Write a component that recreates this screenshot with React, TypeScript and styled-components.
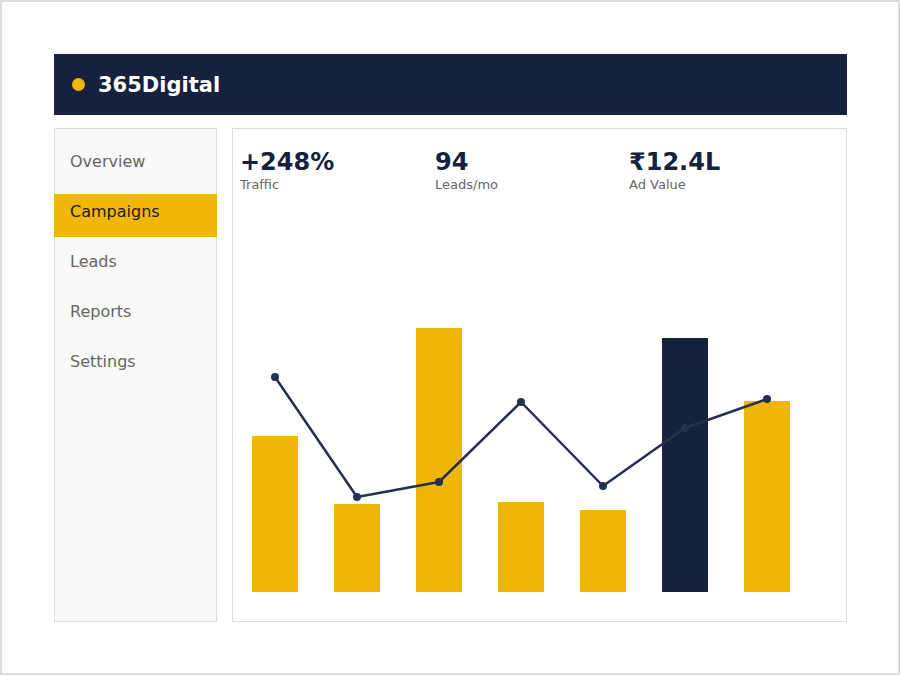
import React from "react";
import styled, { createGlobalStyle } from "styled-components";

const GlobalStyle = createGlobalStyle`
  html, body {
    margin: 0;
    padding: 0;
    background: #fff;
  }
  body {
    font-family: "DejaVu Sans", "Liberation Sans", sans-serif;
  }
`;

const NAVY = "#16223d";
const GOLD = "#f0b708";

const Frame = styled.div`
  box-sizing: border-box;
  width: 900px;
  height: 675px;
  border: 2px solid #dcdcdc;
  padding: 52px 51px 0 52px;
  display: flex;
  flex-direction: column;
`;

const Header = styled.header`
  height: 61px;
  background: ${NAVY};
  display: flex;
  align-items: center;
  padding-left: 18px;
  gap: 13px;
`;

const Dot = styled.span`
  width: 13px;
  height: 13px;
  border-radius: 50%;
  background: ${GOLD};
`;

const Brand = styled.div`
  color: #fff;
  font-weight: bold;
  font-size: 21px;
`;

const Body = styled.div`
  display: flex;
  gap: 15px;
  margin-top: 13px;
  height: 494px;
`;

const Sidebar = styled.nav`
  box-sizing: border-box;
  width: 163px;
  border: 1px solid #dddddd;
  background: #f9f9f7;
  padding-top: 15px;
  display: flex;
  flex-direction: column;
  gap: 7px;
`;

const NavItem = styled.div<{ $active?: boolean }>`
  margin: 0 -1px;
  padding: 8px 16px 16px;
  font-size: 16px;
  color: ${(p) => (p.$active ? "#1c1c1c" : "#666")};
  background: ${(p) => (p.$active ? GOLD : "transparent")};
`;

const Panel = styled.section`
  box-sizing: border-box;
  flex: 1;
  border: 1px solid #dddddd;
  background: #fff;
  display: flex;
  flex-direction: column;
`;

const Stats = styled.div`
  display: grid;
  grid-template-columns: 195px 194px 195px;
  padding: 19px 7px 0;
`;

const Stat = styled.div`
  display: flex;
  flex-direction: column;
`;

const Value = styled.div`
  font-size: 24px;
  font-weight: bold;
  color: ${NAVY};
`;

const Label = styled.div`
  margin-top: 1px;
  font-size: 13px;
  color: #666;
`;

const Chart = styled.svg`
  display: block;
`;

const navItems = ["Overview", "Campaigns", "Leads", "Reports", "Settings"];

const stats = [
  { value: "+248%", label: "Traffic" },
  { value: "94", label: "Leads/mo" },
  { value: "₹12.4L", label: "Ad Value" },
];

// bar heights and trend points, in chart pixels
const bars = [156, 88, 264, 90, 82, 254, 191];
const highlightBar = 5;
const trend = [186, 306, 291, 211, 295, 237, 208];

const BASE = 400;
const BAR_W = 46;
const STEP = 82;
const LEFT = 19;

function TrafficChart() {
  const cx = (i: number) => LEFT + i * STEP + BAR_W / 2;
  const points = trend.map((y, i) => `${cx(i)},${y - 1}`).join(" ");
  return (
    <Chart width={613} height={428} viewBox="0 0 613 428">
      {bars.map((h, i) => (
        <rect
          key={i}
          x={LEFT + i * STEP}
          y={BASE - h}
          width={BAR_W}
          height={h}
          fill={i === highlightBar ? NAVY : GOLD}
        />
      ))}
      <polyline
        points={points}
        fill="none"
        stroke="#25304f"
        strokeWidth={2.5}
        strokeLinejoin="round"
      />
      {trend.map((y, i) => (
        <circle key={i} cx={cx(i)} cy={y - 1} r={4} fill="#25304f" />
      ))}
    </Chart>
  );
}

export default function App() {
  return (
    <>
      <GlobalStyle />
      <Frame>
        <Header>
          <Dot />
          <Brand>365Digital</Brand>
        </Header>
        <Body>
          <Sidebar>
            {navItems.map((n) => (
              <NavItem key={n} $active={n === "Campaigns"}>
                {n}
              </NavItem>
            ))}
          </Sidebar>
          <Panel>
            <Stats>
              {stats.map((s) => (
                <Stat key={s.label}>
                  <Value>{s.value}</Value>
                  <Label>{s.label}</Label>
                </Stat>
              ))}
            </Stats>
            <TrafficChart />
          </Panel>
        </Body>
      </Frame>
    </>
  );
}
